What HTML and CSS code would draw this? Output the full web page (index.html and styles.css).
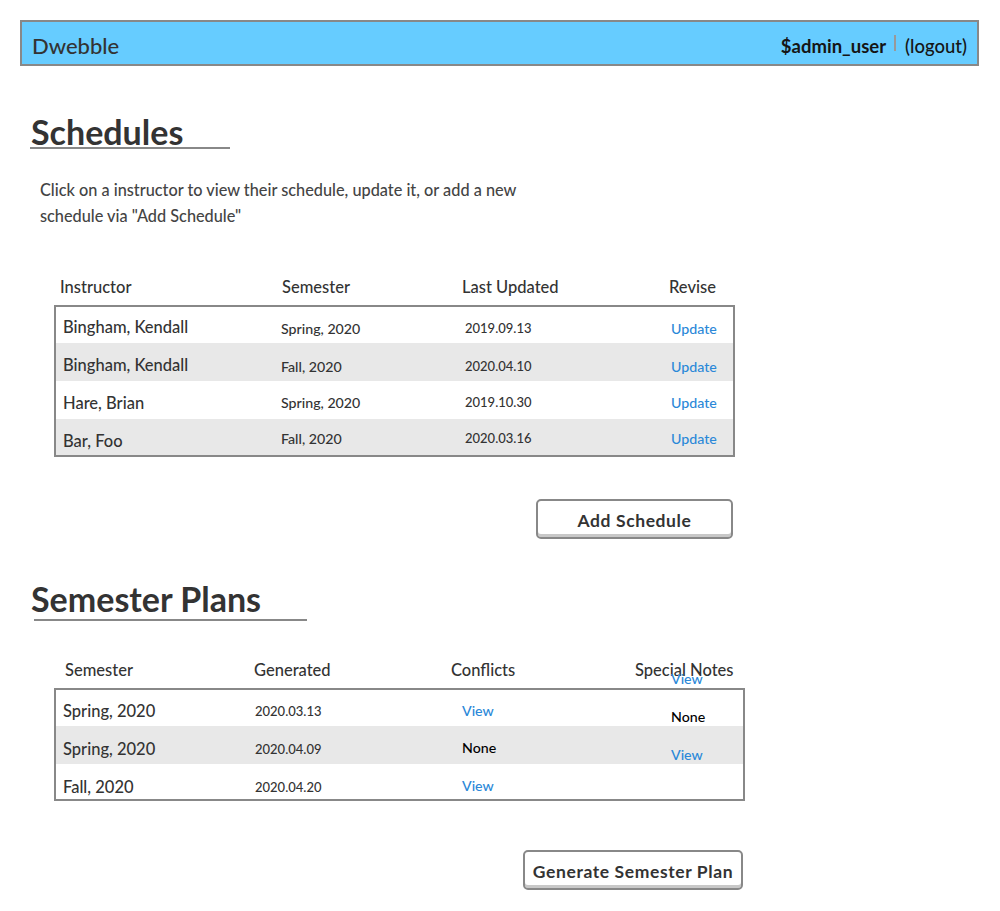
FILE: index.html
```html
<!DOCTYPE html>
<html>
<head>
<meta charset="utf-8">
<title>Dwebble</title>
<link rel="stylesheet" href="styles.css">
</head>
<body>
<header class="topbar">
  <div class="brand">Dwebble</div>
  <div class="user">
    <span class="username">$admin_user</span>
    <span class="sep"></span>
    <span class="logout">(logout)</span>
  </div>
</header>

<section class="section">
  <h1 class="title title-schedules">Schedules</h1>
  <p class="intro">Click on a instructor to view their schedule, update it, or add a new schedule via "Add Schedule"</p>

  <div class="tbl tbl-sched">
    <div class="thead">
      <div>Instructor</div>
      <div>Semester</div>
      <div>Last Updated</div>
      <div>Revise</div>
    </div>
    <div class="tbox">
      <div class="trow r1">
        <div class="c-main">Bingham, Kendall</div>
        <div class="c-small">Spring, 2020</div>
        <div class="c-small">2019.09.13</div>
        <div class="c-link">Update</div>
      </div>
      <div class="trow r2 alt">
        <div class="c-main">Bingham, Kendall</div>
        <div class="c-small">Fall, 2020</div>
        <div class="c-small">2020.04.10</div>
        <div class="c-link">Update</div>
      </div>
      <div class="trow r3">
        <div class="c-main">Hare, Brian</div>
        <div class="c-small">Spring, 2020</div>
        <div class="c-small">2019.10.30</div>
        <div class="c-link">Update</div>
      </div>
      <div class="trow r4 alt">
        <div class="c-main">Bar, Foo</div>
        <div class="c-small">Fall, 2020</div>
        <div class="c-small">2020.03.16</div>
        <div class="c-link">Update</div>
      </div>
    </div>
    <div class="actions">
      <button class="btn btn-add">Add Schedule</button>
    </div>
  </div>
</section>

<section class="section section-plans">
  <h1 class="title title-plans">Semester Plans</h1>

  <div class="tbl tbl-plans">
    <div class="thead">
      <div>Semester</div>
      <div>Generated</div>
      <div>Conflicts</div>
      <div class="notes-head">Special Notes<span class="c-link stray">View</span></div>
    </div>
    <div class="tbox">
      <div class="trow r1">
        <div class="c-main">Spring, 2020</div>
        <div class="c-small">2020.03.13</div>
        <div class="c-link">View</div>
        <div class="c-none notes">None</div>
      </div>
      <div class="trow r2 alt">
        <div class="c-main">Spring, 2020</div>
        <div class="c-small">2020.04.09</div>
        <div class="c-none">None</div>
        <div class="c-link notes">View</div>
      </div>
      <div class="trow r3">
        <div class="c-main">Fall, 2020</div>
        <div class="c-small">2020.04.20</div>
        <div class="c-link">View</div>
        <div class="notes"></div>
      </div>
    </div>
    <div class="actions">
      <button class="btn btn-gen">Generate Semester Plan</button>
    </div>
  </div>
</section>
</body>
</html>
```

FILE: styles.css
```css
* { box-sizing: border-box; }

body {
  margin: 0;
  padding: 20px 21px 0 20px;
  font-family: "Lato", "Open Sans", sans-serif;
  color: #333;
  background: #fff;
}

/* ---------- top bar ---------- */
.topbar {
  height: 46px;
  border: 2px solid #888;
  background: #66ccff;
  display: flex;
  align-items: center;
  justify-content: space-between;
  padding: 4px 10px 0 10px;
}

.brand {
  font-size: 22px;
  font-weight: 500;
  color: #333;
}

.user {
  display: flex;
  align-items: center;
  padding-top: 2px;
  font-size: 18.5px;
  font-weight: 500;
  color: #151515;
}

.username { font-weight: bold; }

.sep {
  width: 2px;
  height: 16px;
  background: #999;
  margin: -6px 9px 0 8px;
}

/* ---------- sections ---------- */
.section { padding-left: 10px; }

.title {
  display: block;
  margin: 0;
  font-size: 34px;
  font-weight: bold;
  color: #333;
  line-height: 30px;
  border-bottom: 2px solid #888;
}

.title-schedules {
  margin-top: 51px;
  width: 200px;
  padding-left: 1px;
}

.intro {
  margin: 28px 0 0 10px;
  width: 500px;
  font-size: 16.3px;
  font-weight: 500;
  line-height: 26px;
  color: #444;
}

/* ---------- tables ---------- */
.tbl { margin-left: 24px; width: 681px; }

.thead {
  display: grid;
  font-size: 16.5px;
  font-weight: 500;
  color: #333;
  height: 28px;
  align-items: center;
}

.tbox { border: 2px solid #888; }

.trow {
  display: grid;
  align-items: start;
  background: #fff;
}

.trow.alt { background: #e8e8e8; }

.c-main { font-size: 16.5px; font-weight: 500; color: #333; }
.c-small { font-size: 14.2px; font-weight: 500; color: #333; }
.c-link { font-size: 14.2px; font-weight: 500; color: #2b88d8; }
.c-none { font-size: 14.2px; font-weight: 500; color: #000; }

/* schedules table */
.tbl-sched { margin-top: 44px; }

.tbl-sched .thead {
  grid-template-columns: 222px 180px 207px 1fr;
  padding-left: 6px;
  margin-bottom: 4px;
}

.tbl-sched .trow {
  grid-template-columns: 218px 184px 206px 1fr;
  padding-left: 7px;
}

.tbl-sched .r1, .tbl-sched .r4 { height: 36px; }
.tbl-sched .r2, .tbl-sched .r3 { height: 38px; }

.tbl-sched .c-main { padding-top: 12px; }
.tbl-sched .r1 .c-main { padding-top: 10px; }
.tbl-sched .r1 .c-small, .tbl-sched .r1 .c-link { padding-top: 13px; }
.tbl-sched .r2 .c-small, .tbl-sched .r2 .c-link { padding-top: 15px; }
.tbl-sched .r3 .c-small, .tbl-sched .r3 .c-link { padding-top: 13px; }
.tbl-sched .r4 .c-small, .tbl-sched .r4 .c-link { padding-top: 11px; }
.tbl-sched .c-small:nth-child(3) { font-size: 13px; }

/* buttons */
.actions {
  display: flex;
  justify-content: flex-end;
  padding-right: 2px;
}

.btn {
  font-family: inherit;
  font-weight: bold;
  font-size: 17.5px;
  letter-spacing: 0.6px;
  color: #333;
  background: #fff;
  border: 2px solid #888;
  border-radius: 5px;
  box-shadow: inset 0 -3px 0 #c8c8c8;
  height: 40px;
  padding: 2px 0 0 0;
}

.btn-add { margin-top: 42px; width: 197px; }

/* plans */
.title-plans {
  margin-top: 45px;
  margin-left: 4px;
  width: 273px;
  text-indent: -3px;
  padding-bottom: 5px;
}

.tbl-plans { margin-top: 35px; width: 691px; }

.tbl-plans .thead {
  grid-template-columns: 189px 197px 184px 1fr;
  padding-left: 11px;
  margin-bottom: 4px;
}

.tbl-plans .trow {
  grid-template-columns: 192px 207px 209px 1fr;
  padding-left: 7px;
}

.tbl-plans .r1 { height: 36px; }
.tbl-plans .r2 { height: 38px; }
.tbl-plans .r3 { height: 35px; }

.tbl-plans .r1 .c-main { padding-top: 10.5px; }
.tbl-plans .r2 .c-main { padding-top: 12.5px; }
.tbl-plans .r3 .c-main { padding-top: 12.5px; }
.tbl-plans .c-small, .tbl-plans .c-link, .tbl-plans .c-none { padding-top: 11.5px; }
.tbl-plans .r1 .c-small { padding-top: 12.5px; }
.tbl-plans .r2 .c-small { padding-top: 14.5px; }
.tbl-plans .r2 .c-none { padding-top: 12.5px; }
.tbl-plans .r3 .c-small { padding-top: 14.5px; }
.tbl-plans .r3 .c-link { padding-top: 12.5px; }
.tbl-plans .c-small { font-size: 13px; }
.tbl-plans .r1 .notes { padding-top: 17.5px; }
.tbl-plans .r2 .notes { padding-top: 19.5px; }

.notes-head { position: relative; }

.tbl-plans .stray {
  position: absolute;
  left: 36px;
  top: 9.5px;
  padding-top: 0;
}

.btn-gen { margin-top: 49px; width: 220px; }
```
